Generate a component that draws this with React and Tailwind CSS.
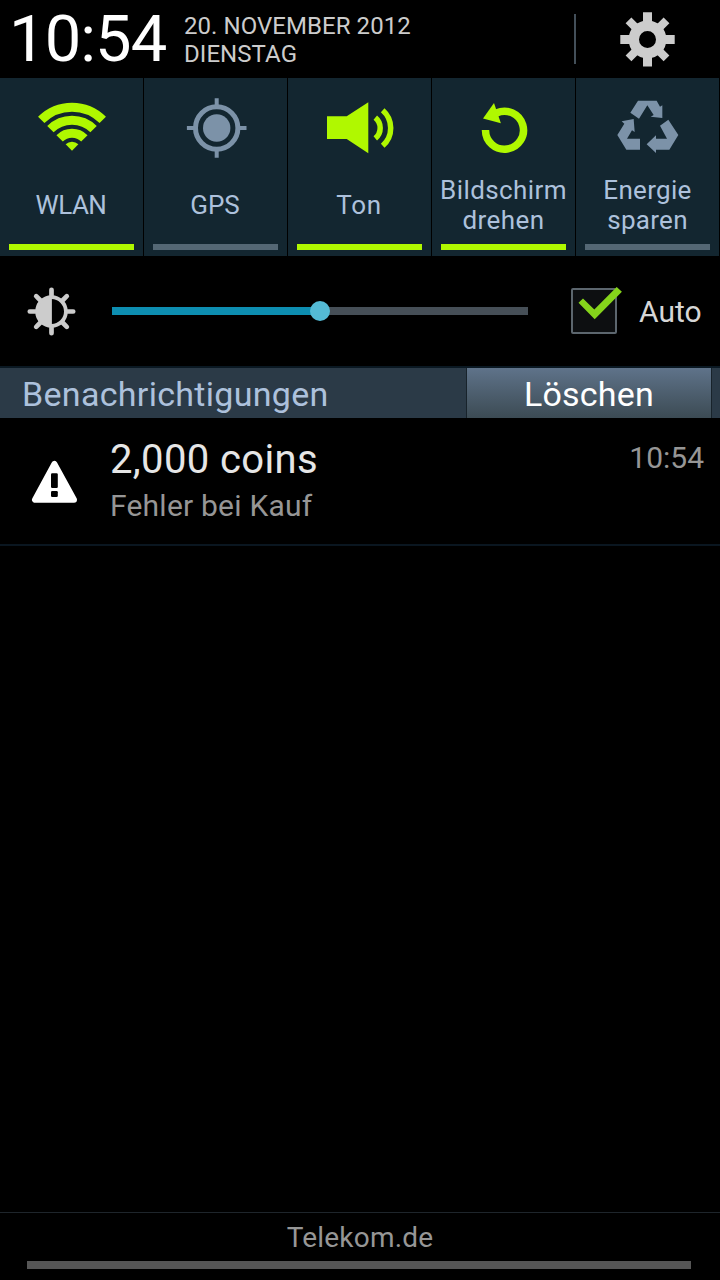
import React from "react";

const GREEN = "#b0f800";
const STEEL = "#7c92a8";

function WifiIcon() {
  return (
    <svg className="h-16 w-[71px]" viewBox="36 96 71 64" fill="none" stroke={GREEN} strokeWidth="9">
      <path d="M41.24 119.94A43.5 43.5 0 0 1 102.76 119.94" />
      <path d="M50.43 129.13A30.5 30.5 0 0 1 93.57 129.13" />
      <path d="M59.63 138.33A17.5 17.5 0 0 1 84.37 138.33" />
      <path d="M72 150.7L65.64 144.34A9 9 0 0 1 78.36 144.34Z" fill={GREEN} stroke="none" />
    </svg>
  );
}

function GpsIcon() {
  return (
    <svg className="h-16 w-[71px]" viewBox="36 96 71 64" fill="none" stroke={STEEL}>
      <circle cx="72.7" cy="128" r="21.2" strokeWidth="5" />
      <circle cx="72.7" cy="128" r="13.7" fill={STEEL} stroke="none" />
      <path d="M72.7 98.2V106M72.7 150V157.8M42.9 128H51M94.4 128H102.5" strokeWidth="4" />
    </svg>
  );
}

function SoundIcon() {
  return (
    <svg className="h-16 w-[71px]" viewBox="36 96 71 64" fill="none" stroke={GREEN}>
      <path d="M39 116.3H58.7L80.3 102.3V153.3L58.7 139H39Z" fill={GREEN} stroke="none" />
      <path d="M87.3 117.7A13.3 13.3 0 0 1 87.3 138.3" strokeWidth="5.5" />
      <path d="M94.7 110.2A23.8 23.8 0 0 1 94.7 145.8" strokeWidth="5.5" />
    </svg>
  );
}

function RotateIcon() {
  return (
    <svg className="h-16 w-[71px]" viewBox="36 96 71 64" fill="none" stroke={GREEN}>
      <path d="M53.5 130A19 19 0 1 0 64.5 113" strokeWidth="7.5" />
      <path d="M51 118.6L62 103L68.9 123.2Z" fill={GREEN} stroke="none" />
    </svg>
  );
}

function RecycleIcon() {
  return (
    <svg className="h-16 w-[71px]" viewBox="36 96 71 64" fill={STEEL}>
      <g transform="translate(-76 76) scale(0.33333)">
        <path d="M414 74H470L480 92L487 88V126L452 122L461 117L442 88L417 128L391 110Z" />
        <path d="M365 136L401 129L404 168L396 163L381 188H420V221H379L352 177L373 143Z" />
        <path d="M480 149L505 131L535 177L508 221H468V231L440 205L468 178V188H501Z" />
      </g>
    </svg>
  );
}

function GearIcon() {
  return (
    <svg className="h-14 w-14" viewBox="-27.5 -28.4 56 56" fill="none" stroke="#cccccc">
      <circle r="13.7" strokeWidth="10.4" />
      <path d="M0 -27.2V-16M0 16V27.2M-27.2 0H-16M16 0H27.2" strokeWidth="9" />
      <path d="M-19 -19L-11.5 -11.5M19 -19L11.5 -11.5M-19 19L-11.5 11.5M19 19L11.5 11.5" strokeWidth="8.2" />
    </svg>
  );
}

function BrightnessIcon() {
  return (
    <svg className="h-[50px] w-[50px]" viewBox="-25.5 -25.5 50 50" fill="none" stroke="#cccccc">
      <circle r="14.4" strokeWidth="3.8" />
      <path d="M0.4 -14V14A14 14 0 0 1 0.4 -14Z" fill="#cccccc" stroke="none" />
      <path
        d="M0 -21.7V-16M0 16V21.7M-21.7 0H-16M16 0H21.7M-15.3 -15.3L-11 -11M15.3 -15.3L11 -11M-15.3 15.3L-11 11M15.3 15.3L11 11"
        strokeWidth="4.7"
        strokeLinecap="round"
      />
    </svg>
  );
}

function WarningIcon() {
  return (
    <svg className="h-12 w-12" viewBox="30 458 48 48">
      <path d="M54.4 464L35 499.8H74Z" fill="#fff" stroke="#fff" strokeWidth="6" strokeLinejoin="round" />
      <rect x="51" y="473.2" width="6.8" height="14.8" rx="1.2" fill="#000" />
      <rect x="51" y="491" width="6.8" height="6" rx="1.2" fill="#000" />
    </svg>
  );
}

const tiles = [
  { lines: ["WLAN"], on: true, Icon: WifiIcon, tracking: "tracking-[-0.5px] pr-px" },
  { lines: ["GPS"], on: false, Icon: GpsIcon, tracking: "tracking-[0px] pr-px" },
  { lines: ["Ton"], on: true, Icon: SoundIcon, tracking: "tracking-[0.7px] pr-px" },
  { lines: ["Bildschirm", "drehen"], on: true, Icon: RotateIcon, tracking: "tracking-[0.4px]" },
  { lines: ["Energie", "sparen"], on: false, Icon: RecycleIcon, tracking: "tracking-[0.3px]" },
];

function Tile({ lines, on, Icon, tracking }) {
  return (
    <div className="mr-px flex flex-col items-center bg-[#132630] pt-[18px]">
      <Icon />
      <div
        className={`mt-[10px] flex h-[70px] flex-col items-center justify-center whitespace-nowrap text-[26px] leading-[30px] text-[#adc1dc] ${tracking}`}
      >
        {lines.map((line) => (
          <span key={line}>{line}</span>
        ))}
      </div>
      <div className={on ? "mt-1 h-1.5 w-[125px] bg-[#b0f800]" : "mt-1 h-1.5 w-[125px] bg-[#546774]"} />
    </div>
  );
}

export default function App() {
  return (
    <div className="flex h-[1280px] w-[720px] flex-col overflow-hidden bg-black font-['Roboto',sans-serif]">
      <header className="flex h-[78px] shrink-0 items-center">
        <div className="w-[184px] pl-[9px] text-[65px] leading-[78px] tracking-[-0.9px] text-white">10:54</div>
        <div className="w-[390px] pt-[2px] text-[24px] leading-7 tracking-[0.06px] text-[#cccccc]">
          <div>20. NOVEMBER 2012</div>
          <div>DIENSTAG</div>
        </div>
        <div className="h-[50px] w-0.5 bg-[#434f59]" />
        <div className="flex flex-1 justify-center">
          <GearIcon />
        </div>
      </header>

      <div className="grid h-[178px] shrink-0 grid-cols-5">
        {tiles.map((tile) => (
          <Tile key={tile.lines[0]} {...tile} />
        ))}
      </div>

      <div className="flex h-[110px] shrink-0 items-center pl-[26px]">
        <BrightnessIcon />
        <div className="relative ml-9 flex h-2 w-[416px] bg-[#464f57]">
          <div className="h-full w-1/2 bg-[#0d8eb1]" />
          <div className="absolute -top-1.5 left-[198px] h-5 w-5 rounded-full bg-[#54bbd6]" />
        </div>
        <div className="relative ml-[43px] h-[46px] w-[46px] rounded-[2px] border-2 border-[#5c666e] bg-[#0d0f11]">
          <svg className="absolute -left-0.5 -top-1 h-12 w-[54px]" viewBox="571 286 54 48">
            <path d="M578.5 302.7L583 298.5L594.3 309.6L616.7 287.1L621.9 291.7L594.7 319.2Z" fill="#85d41b" />
          </svg>
        </div>
        <div className="ml-[22px] pt-0.5 text-[30px] leading-9 text-[#d6d6d6]">Auto</div>
      </div>

      <div className="flex h-[52px] shrink-0 border-t-2 border-[#0a1822] bg-[#2b3a47] text-[34px] leading-[52px]">
        <div className="w-[466px] pl-[22px] tracking-[0.3px] text-[#adc1dc]">Benachrichtigungen</div>
        <div className="w-[246px] border-x border-[#18232b] bg-linear-to-b from-[#5f738a] to-[#3c4b54] text-center tracking-[0.2px] text-white">
          Löschen
        </div>
      </div>

      <div className="flex h-32 shrink-0 border-b-2 border-[#0a1620]">
        <div className="w-[110px] pl-[30px] pt-10">
          <WarningIcon />
        </div>
        <div className="flex-1 pt-[18px]">
          <div className="text-[40px] leading-[48px] tracking-[0.37px] text-[#e6e6e6]">2,000 coins</div>
          <div className="text-[30px] leading-[44px] tracking-[0.22px] text-[#969696]">Fehler bei Kauf</div>
        </div>
        <div className="pr-4 pt-[22px] text-[30px] leading-9 text-[#969696]">10:54</div>
      </div>

      <div className="flex-1" />

      <footer className="flex h-[68px] shrink-0 flex-col items-center border-t border-[#1e252b]">
        <div className="h-12 text-[28px] leading-[50px] tracking-[0.2px] text-[#969696]">Telekom.de</div>
        <div className="mr-0.5 h-2 w-[664px] bg-[#565656]" />
      </footer>
    </div>
  );
}
